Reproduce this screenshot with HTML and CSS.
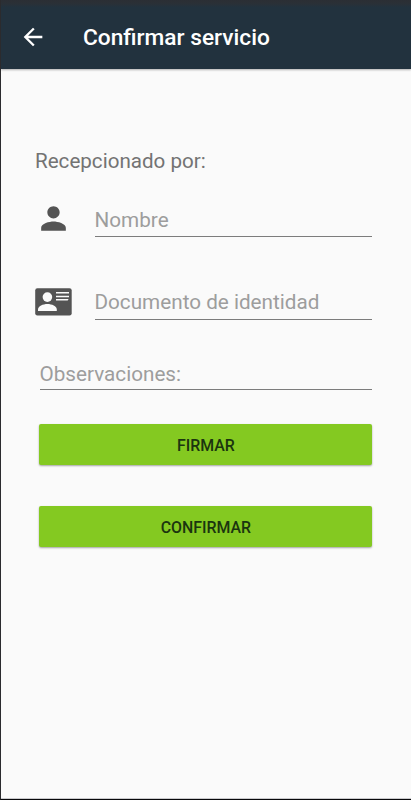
FILE: index.html
```
<!DOCTYPE html>
<html lang="es">
<head>
<meta charset="utf-8">
<title>Confirmar servicio</title>
<link rel="stylesheet" href="styles.css">
</head>
<body>
<div class="screen">
  <header class="bar">
    <svg class="back" viewBox="0 0 24 24"><path d="M20 11H7.83l5.59-5.59L12 4l-8 8 8 8 1.41-1.41L7.83 13H20z"/></svg>
    <h1 class="title">Confirmar servicio</h1>
  </header>
  <main class="form">
    <p class="label">Recepcionado por:</p>
    <div class="row">
      <svg class="icon" viewBox="0 0 24 24"><path d="M12 12c2.21 0 4-1.79 4-4s-1.79-4-4-4-4 1.79-4 4 1.79 4 4 4zm0 2c-2.67 0-8 1.34-8 4v2h16v-2c0-2.66-5.33-4-8-4z"/></svg>
      <div class="field"><span class="hint name">Nombre</span></div>
    </div>
    <div class="row second">
      <svg class="icon card" viewBox="0 0 37 28">
        <rect x="0.2" y="0.2" width="36.5" height="27.3" rx="2.2"/>
        <g class="cut">
          <circle cx="12.4" cy="9.1" r="4.8"/>
          <path d="M3 22.9v-1.4c0-3.5 5-5.6 9.4-5.6s9.4 2.1 9.4 5.6v1.4z"/>
          <path d="M21 4.1h13v1.4H21zM21 7.8h13v1.4H21zM21 11.1h12.6l-.9 1.4H21z"/>
        </g>
      </svg>
      <div class="field"><span class="hint doc">Documento de identidad</span></div>
    </div>
    <div class="field notes"><span class="hint obs">Observaciones:</span></div>
    <button class="btn sign">FIRMAR</button>
    <button class="btn confirm">CONFIRMAR</button>
  </main>
</div>
</body>
</html>
```
FILE: styles.css
```
* { box-sizing: border-box; }
body { margin: 0; font-family: Roboto, sans-serif; background: #fafafa; }
.screen {
  height: 800px;
  display: flex;
  flex-direction: column;
  border-left: 1px solid #2b2b2e;
  border-bottom: 1px solid #08080a;
  box-shadow: inset 0 -1px #c9c9cc;
  overflow: hidden;
}
.bar {
  height: 69px;
  flex: none;
  display: flex;
  align-items: center;
  padding: 7px 0 0 18px;
  background: linear-gradient(#2b2e34 0, #2a3037 4px, #22323e 7px);
  box-shadow: 0 1px 2px rgba(0, 0, 0, .3);
}
.back { width: 28px; height: 28px; fill: #fff; flex: none; margin-bottom: 2px; }
.title {
  margin: 0 0 0 36px;
  font-size: 22.7px;
  line-height: 28px;
  font-weight: 500;
  color: #fff;
  white-space: nowrap;
}
.form { padding: 78px 39px 0 34px; }
.label { margin: 0; height: 27px; font-size: 20.6px; line-height: 28px; color: #737373; }
.row { display: flex; height: 63px; align-items: flex-end; }
.row.second { margin-top: 20px; }
.icon { width: 37px; height: 37px; flex: none; fill: #545454; }
.card { height: 28px; margin-bottom: 4px; }
.cut { fill: #fafafa; }
.field {
  height: 34px;
  flex: 1;
  display: flex;
  border-bottom: 1px solid #7c7c7c;
}
.row .field { margin-left: 22.5px; }
.hint { font-size: 20.7px; line-height: 32px; color: #9d9d9d; white-space: nowrap; }
.name { line-height: 34px; }
.notes { margin: 36px 0 0 4.5px; }
.obs { line-height: 36px; }
.btn {
  display: block;
  width: 333px;
  height: 41px;
  margin: 34px 0 0 4.4px;
  padding: 2px 0 0;
  border: 0;
  border-radius: 2px;
  background: #84c921;
  box-shadow: 0 1px 2px rgba(0, 0, 0, .35);
  font: 500 15.9px/39px Roboto, sans-serif;
  color: #1b350f;
}
.confirm { margin-top: 41px; }
```
